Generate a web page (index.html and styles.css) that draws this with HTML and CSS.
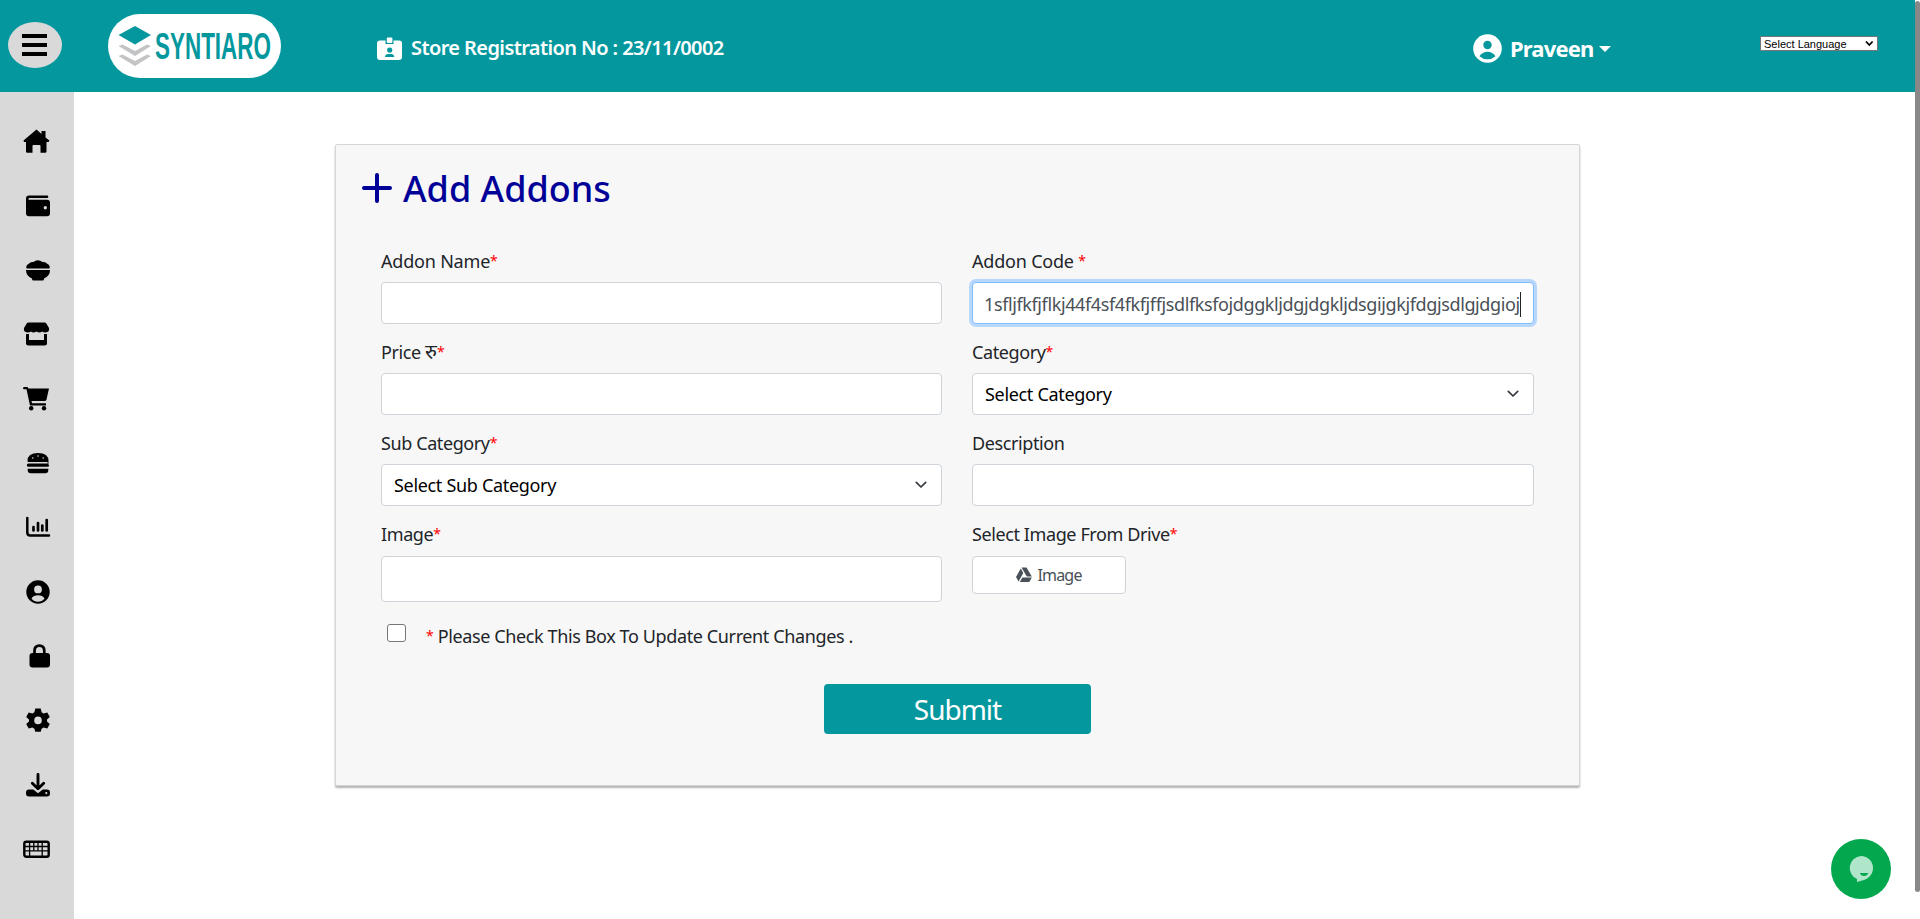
FILE: index.html
```html
<!DOCTYPE html>
<html lang="en">
<head>
<meta charset="utf-8">
<title>Add Addons</title>
<link rel="stylesheet" href="styles.css">
</head>
<body>
<header class="topbar">
  <button class="menu-btn" aria-label="Menu"><span></span><span></span><span></span></button>
  <div class="logo">
    <svg width="173" height="64" viewBox="0 0 173 64">
      <path d="M27 12L43 21L27 30.500L10.500 21Z" fill="#04989e"/>
      <path d="M10.500 32l4-1.600L27 37l12-6.600 4 1.600-16 10zM10.500 42l4-1.600L27 47l12-6.600 4 1.600-16 10z" fill="#c3c4c6"/>
      <text x="47" y="45" class="logo-text" textLength="116" lengthAdjust="spacingAndGlyphs">SYNTIARO</text>
    </svg>
  </div>
  <div class="store">
    <svg width="26" height="24" viewBox="0 0 26 24">
      <path fill="#fff" fill-rule="evenodd" d="M3 3.500h5.500V7h8V3.500H22a3 3 0 0 1 3 3V20a3 3 0 0 1-3 3H3a3 3 0 0 1-3-3V6.500a3 3 0 0 1 3-3zM12.700 10.500a2.600 2.600 0 1 0 0 5.200 2.600 2.600 0 0 0 0-5.200zM8 20h9.300c0-2-1.500-3-3-3h-3.300c-1.500 0-3 1-3 3z"/>
      <rect x="9.800" y=".5" width="5.600" height="5.500" rx="1" fill="#fff"/>
    </svg>
    <span class="store-text">Store Registration No : 23/11/0002</span>
  </div>
  <div class="user">
    <svg width="29" height="29" viewBox="0 0 29 29"><circle cx="14.500" cy="14.500" r="14.300" fill="#fff"/><circle cx="14.500" cy="11" r="4.200" fill="#04989e"/><path d="M6.500 22.300q3-4.500 8-4.500t8 4.500q-3.300 3-8 3t-8-3z" fill="#04989e"/></svg>
    <span class="user-name">Praveen</span>
    <i class="caret"></i>
  </div>
  <div class="lang"><span>Select Language</span><svg width="9" height="7" viewBox="0 0 9 7"><path d="M1 1.500l3.300 3.500L7.600 1.500" fill="none" stroke="#000" stroke-width="1.800"/></svg></div>
</header>
<div class="body">
  <nav class="sidebar">
    <a><svg viewBox="0 0 28 28"><path d="M13.500 2.500L18.500 7V4h4v6.500L26.500 13.500 25.500 15h-2v9.500q0 1.300-1.300 1.300H17.500V19q0-1-1-1h-6q-1 0-1 1v6.800H4.300Q3 25.800 3 24.500V15H1L.5 13.500z"/></svg></a>
    <a><svg viewBox="0 0 28 28"><path fill-rule="evenodd" d="M6 3.500h18q1.300 0 1.300 1.300T24 6H6.300q-.8 0-.8.900t.8.900H24q3 0 3 3v10.400q0 3-3 3H6q-3 0-3-3V6.500q0-3 3-3zM22.300 14a1.700 1.700 0 1 0 0 3.400 1.700 1.700 0 0 0 0-3.400z"/></svg></a>
    <a><svg viewBox="0 0 28 28"><path d="M3.500 12.500q-1-3 2-4.500 2-2.500 5-2 4-3.500 9 0 3-.5 5 2 3 1.500 2 4.500zM3 14h24q0 6-6 8.500v.5q0 1.500-1.500 1.500h-9Q9 24.500 9 23v-.5Q3 20 3 14z"/></svg></a>
    <a><svg viewBox="0 0 28 28"><path d="M5.500 2.500h16q1.300 0 2 1.200L26 8q.8 4-3.500 4.500-2.500 0-3.200-1-3 2.200-5.800 0-3 2.200-5.800 0-.7 1-3.200 1Q.2 12 1 8l2.500-4.300q.7-1.200 2-1.200zM3 14h3v6h15v-6h3v9q0 2.500-2.500 2.500h-16Q3 25.500 3 23z"/></svg></a>
    <a><svg viewBox="0 0 28 28"><path d="M1 2h3.500L5.500 3.500H26L23.500 14.500q-.4 1.500-2 1.500H8.500l.5 2.300h14v2.200H7L3.500 4.300H1Q0 4 0 3.200T1 2z"/><circle cx="8.200" cy="23.300" r="2.200"/><circle cx="21" cy="23.300" r="2.200"/></svg></a>
    <a><svg viewBox="0 0 28 28"><path fill-rule="evenodd" d="M4.500 12q0-8 10.500-8t10.500 8-1 1h-19q-1 0-1-1zM9.800 8.200a.8.800 0 1 0 0 1.600.8.800 0 0 0 0-1.600zm5.200-2a.8.800 0 1 0 0 1.600.8.800 0 0 0 0-1.600zm5.200 2a.8.800 0 1 0 0 1.600.8.800 0 0 0 0-1.600zM5.500 14.500h19a1.600 1.600 0 0 1 0 3.300h-19a1.600 1.600 0 0 1 0-3.300zM4.700 19.800h20.600v1.500q0 3-3 3H7.700q-3 0-3-3z"/></svg></a>
    <a><svg viewBox="0 0 28 28"><path d="M4.300 5v14.500q0 3 3 3H26" fill="none" stroke="#000" stroke-width="2.500" stroke-linecap="round"/><path d="M10.500 14v3.500M15 10v7.500M19.300 12.500v5M23.700 7v10.500" stroke="#000" stroke-width="2.700" stroke-linecap="round"/></svg></a>
    <a><svg viewBox="0 0 28 28"><path fill-rule="evenodd" d="M15 2.300a11.700 11.700 0 1 0 0 23.400 11.700 11.700 0 0 0 0-23.400zM15 7.500a3.900 3.900 0 1 1 0 7.800 3.900 3.900 0 0 1 0-7.800zM15 17.200q4.500 0 6.500 3.300-2.500 3.200-6.500 3.200T8.500 20.500q2-3.300 6.500-3.300z"/></svg></a>
    <a><svg viewBox="0 0 28 28"><path d="M11.500 12V9q0-5.300 4.900-5.300T21.300 9v3" fill="none" stroke="#000" stroke-width="2.700"/><rect x="6.500" y="11" width="20.500" height="14.500" rx="3"/></svg></a>
    <a><svg viewBox="0 0 28 28"><path fill-rule="evenodd" d="M12.300 2.500h5.400l.9 3.800 2 1.200 3.700-1.100 2.500 4.500-2.800 2.700v1.800l2.800 2.700-2.500 4.500-3.700-1.100-2 1.200-.9 3.100h-5.400l-.9-3.100-2-1.200-3.700 1.100-2.500-4.500L6 15.400v-1.800l-2.800-2.700 2.500-4.500 3.700 1.100 2-1.200zM15 10.600a3.800 3.800 0 1 0 0 7.600 3.800 3.800 0 0 0 0-7.600z"/></svg></a>
    <a><svg viewBox="0 0 28 28"><path d="M15 3.500V17M9.300 12.300L15 17.800l5.700-5.500" fill="none" stroke="#000" stroke-width="2.900" stroke-linecap="round" stroke-linejoin="round"/><path fill-rule="evenodd" d="M6 18.500h4.300L15 22.300l4.700-3.800H24q3 0 3 3v1q0 3-3 3H6q-3 0-3-3v-1q0-3 3-3zM23.300 21a1.100 1.100 0 1 0 0 2.200 1.100 1.100 0 0 0 0-2.200z"/></svg></a>
    <a><svg viewBox="0 0 28 28"><rect x="1.300" y="6.800" width="24.400" height="15" rx="2" fill="none" stroke="#000" stroke-width="2.400"/><path d="M2 11.500h23M2 15.800h23M6.600 7v14M10.800 7v9M15 7v9M19.200 7v14.500" stroke="#000" stroke-width="1.300"/></svg></a>
  </nav>
  <main class="main">
    <section class="card">
      <h1 class="title"><svg width="30" height="30" viewBox="0 0 30 30"><path d="M15 2v26M2 15h26" stroke="#000099" stroke-width="4" stroke-linecap="round"/></svg><span>Add Addons</span></h1>
      <form class="form">
        <div class="field"><label class="loose">Addon Name<b>*</b></label><div class="input"></div></div>
        <div class="field"><label class="loose">Addon Code <b>*</b></label><div class="input focused"><span class="value">1sfljfkfjflkj44f4sf4fkfjffjsdlfksfojdggkljdgjdgkljdsgijgkjfdgjsdlgjdgioj</span></div></div>
        <div class="field"><label>Price <span class="rupee">रु</span><b>*</b></label><div class="input"></div></div>
        <div class="field"><label>Category<b>*</b></label><div class="input select"><span>Select Category</span><svg width="12" height="8" viewBox="0 0 12 8"><path d="M1.300 1.300L6 6l4.700-4.700" fill="none" stroke="#343a40" stroke-width="1.700" stroke-linecap="round" stroke-linejoin="round"/></svg></div></div>
        <div class="field"><label>Sub Category<b>*</b></label><div class="input select"><span>Select Sub Category</span><svg width="12" height="8" viewBox="0 0 12 8"><path d="M1.300 1.300L6 6l4.700-4.700" fill="none" stroke="#343a40" stroke-width="1.700" stroke-linecap="round" stroke-linejoin="round"/></svg></div></div>
        <div class="field"><label>Description</label><div class="input"></div></div>
        <div class="field last"><label>Image<b>*</b></label><div class="input tall"></div></div>
        <div class="field last"><label>Select Image From Drive<b>*</b></label>
          <div class="input drive"><svg width="16" height="16" viewBox="0 0 16 16"><path d="M5.500.5h5L15.800 9.500h-5zM4.800 1.500L7.300 6 2.600 14.500 0 10zM6.400 10.500h9.400L13.300 15H3.800z" fill="#495057"/></svg><span>Image</span></div></div>
      </form>
      <div class="confirm"><i class="check"></i><span><b>*</b> Please Check This Box To Update Current Changes .</span></div>
      <button class="submit">Submit</button>
    </section>
  </main>
</div>
<div class="scrollbar"></div>
<div class="chat"><svg width="60" height="60" viewBox="0 0 60 60"><path d="M30 17a12 12 0 0 1 12 12c0 6-4 10-9 12l-7 2v-3A12 12 0 0 1 30 17z" fill="#afe5c9"/><path d="M29 34h8.300q-1 3-4.300 3t-4-3z" fill="#03a84e"/></svg></div>
</body>
</html>
```

FILE: styles.css
```css
* { box-sizing: border-box; }
body { margin: 0; width: 1920px; height: 919px; overflow: hidden; background: #fff; color: #212529; font-family: "Noto Sans", "Open Sans", sans-serif; }
svg { display: block; flex: none; overflow: visible; }
b { color: #f00; font-weight: 400; font-size: 14px; line-height: 1; vertical-align: 2px; }

.topbar { display: flex; align-items: flex-start; width: 1915px; height: 92px; background: #04989e; color: #fff; }
.menu-btn { display: flex; flex-direction: column; align-items: center; justify-content: center; gap: 5px; width: 54px; height: 46px; margin: 22px 0 0 8px; padding: 0 2px 0 0; border: 0; border-radius: 50%; background: #d9d9d9; }
.menu-btn span { width: 25px; height: 4px; background: #000; }
.logo { width: 173px; height: 64px; margin: 14px 0 0 46px; border-radius: 32px; background: #fff; }
.logo-text { font: bold 37px "Liberation Sans", Arial, sans-serif; fill: #04989e; }
.store { display: flex; align-items: center; gap: 8px; width: 360px; height: 24px; margin: 37px 0 0 96px; white-space: nowrap; }
.store-text { margin-top: -3px; font-size: 20px; font-weight: 600; letter-spacing: -.6px; }
.user { display: flex; align-items: center; height: 29px; margin: 34px 0 0 736px; }
.user-name { width: 83px; margin: -2px 0 0 8px; font-size: 22px; font-weight: 700; letter-spacing: -.85px; }
.caret { margin: 0 0 0 6px; border: 6px solid transparent; border-top-color: #fff; border-bottom: 0; }
.lang { display: flex; align-items: center; justify-content: space-between; width: 118px; height: 15px; margin: 36px 0 0 149px; padding: 0 3px; border: 1px solid #767676; border-radius: 1px; background: #fff; color: #000; font: 11px "Liberation Sans", Arial, sans-serif; }

.body { display: flex; width: 1915px; height: 827px; }
.sidebar { display: flex; flex-direction: column; width: 74px; padding-top: 17px; background: #d9d9d9; }
.sidebar a { display: flex; align-items: center; height: 64.36px; padding-left: 23px; }
.sidebar svg { width: 28px; height: 28px; }

.main { flex: 1; padding: 52px 0 0 261px; }
.card { width: 1245px; height: 642px; border: 1px solid #d5d6d7; border-radius: 2px; background: #f7f7f7; box-shadow: 0 2px 2px rgba(0, 0, 0, .3); }
.title { display: flex; align-items: center; gap: 11px; height: 50px; margin: 18px 0 0 26px; color: #009; font-size: 36px; font-weight: 500; white-space: nowrap; }
.form { display: grid; grid-template-columns: 561px 562px; column-gap: 30px; row-gap: 16px; margin: 36px 0 0 45px; }
.field label { display: block; height: 33px; font-size: 18px; line-height: 24px; letter-spacing: -.4px; white-space: nowrap; }
.field label.loose { letter-spacing: -.2px; }
.rupee { font-size: 20px; line-height: 1; letter-spacing: 0; }
.input { display: flex; align-items: center; height: 42px; padding: 0 12px; border: 1px solid #ced4da; border-radius: 4px; background: #fff; font-size: 18px; white-space: nowrap; }
.focused { padding: 2px 0 0 11px; border-color: #80bdff; box-shadow: 0 0 0 3px #b8d8fb; color: #495057; }
.value { height: 25px; border-right: 1px solid #222; line-height: 25px; letter-spacing: -.38px; }
.select { justify-content: space-between; padding-right: 14px; color: #000; letter-spacing: -.32px; }
.last .input { margin-top: 1px; }
.input.tall { height: 46px; }
.input.drive { justify-content: center; gap: 5px; width: 154px; height: 38px; font-size: 16px; letter-spacing: -.8px; color: #495057; }
.confirm { display: flex; gap: 20px; height: 28px; margin: 21px 0 0 51px; font-size: 18px; letter-spacing: -.38px; line-height: 26px; white-space: nowrap; }
.check { width: 19px; height: 18px; margin-top: 1px; border: 1px solid #767676; border-radius: 3px; background: #fff; }
.submit { display: block; width: 267px; height: 50px; margin: 33px 0 0 488px; padding: 0; border: 0; border-radius: 4px; background: #04989e; color: #fff; font: 28px "Noto Sans", sans-serif; letter-spacing: -1px; }

.scrollbar { position: absolute; top: 1px; left: 1915px; width: 5px; height: 891px; border-radius: 3px; background: #888; }
.chat { position: absolute; left: 1831px; top: 839px; width: 60px; height: 60px; border-radius: 50%; background: #03a84e; }
```
